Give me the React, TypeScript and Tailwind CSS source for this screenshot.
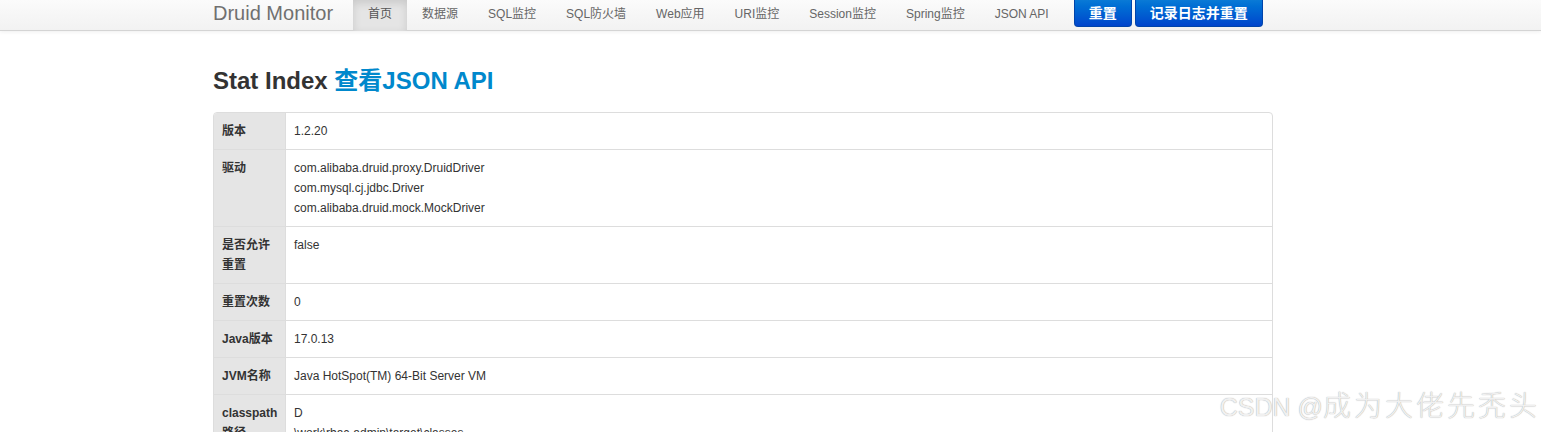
import React from "react";

const font = '"Liberation Sans", Arial, "Noto Sans CJK SC", sans-serif';

const navItems = ["首页", "数据源", "SQL监控", "SQL防火墙", "Web应用", "URI监控", "Session监控", "Spring监控", "JSON API"];

const rows: { label: string; value: string[] }[] = [
  { label: "版本", value: ["1.2.20"] },
  {
    label: "驱动",
    value: [
      "com.alibaba.druid.proxy.DruidDriver",
      "com.mysql.cj.jdbc.Driver",
      "com.alibaba.druid.mock.MockDriver",
    ],
  },
  { label: "是否允许重置", value: ["false"] },
  { label: "重置次数", value: ["0"] },
  { label: "Java版本", value: ["17.0.13"] },
  { label: "JVM名称", value: ["Java HotSpot(TM) 64-Bit Server VM"] },
  { label: "classpath路径", value: ["D", "\\work\\rbac-admin\\target\\classes"] },
];

export default function App() {
  return (
    <div className="relative h-[432px] w-full overflow-hidden bg-white text-[#333]" style={{ fontFamily: font }}>
      {/* navbar */}
      <div className="h-[31px] border-b border-[#d4d4d4] bg-gradient-to-b from-[#fbfbfb] to-[#f2f2f2] shadow-[0_1px_4px_rgba(0,0,0,0.065)]">
        <div className="ml-[213px] flex h-full items-start">
          <div className="pr-[20px] pt-[3px] text-[20px] leading-[20px] text-[#707070]">Druid Monitor</div>
          {navItems.map((n, i) => (
            <div
              key={n}
              className={
                i === 0
                  ? "h-[31px] bg-[#e5e5e5] px-[15px] pt-[4px] text-[12px] leading-[20px] text-[#555] shadow-[inset_0_3px_8px_rgba(0,0,0,0.125)]"
                  : "h-[31px] px-[15px] pt-[4px] text-[12px] leading-[20px] text-[#666]"
              }
            >
              {n}
            </div>
          ))}
          <div className="ml-[10px] flex gap-[3px]">
            <div className="flex h-[27px] items-center rounded-b-[4px] border border-t-0 border-[#0044aa] bg-gradient-to-b from-[#0a7ad6] to-[#0044cc] px-[14px] text-[14px] font-bold text-white">
              重置
            </div>
            <div className="flex h-[27px] items-center rounded-b-[4px] border border-t-0 border-[#0044aa] bg-gradient-to-b from-[#0a7ad6] to-[#0044cc] px-[14px] text-[14px] font-bold text-white">
              记录日志并重置
            </div>
          </div>
        </div>
      </div>

      {/* heading */}
      <h3 className="ml-[213px] mt-[30px] text-[24px] font-bold leading-[40px] text-[#333]">
        Stat Index <span className="text-[#0088cc]">查看JSON API</span>
      </h3>

      {/* table */}
      <div className="ml-[213px] mt-[11px] w-[1060px] overflow-hidden rounded-[4px] border border-[#dddddd]">
        {rows.map((r, i) => (
          <div key={r.label} className={i === 0 ? "flex" : "flex border-t border-[#dddddd]"}>
            <div className="w-[72px] shrink-0 border-r border-[#dddddd] bg-[#e5e5e5] p-[8px] text-[12px] font-bold leading-[20px] text-[#333]">
              {r.label}
            </div>
            <div className="flex-1 p-[8px] text-[12px] leading-[20px] text-[#333]">
              {r.value.map((v) => (
                <div key={v}>{v}</div>
              ))}
            </div>
          </div>
        ))}
      </div>

      {/* watermark */}
      <div
        className="absolute bottom-[10px] right-[4px] flex items-baseline whitespace-nowrap font-light leading-[30px] text-[#f0f0f0]"
        style={{ textShadow: "0 0 1px #999999" }}
      >
        <span className="text-[25px]">CSDN @</span>
        <span className="text-[28px] tracking-[3px]">成为大佬先秃</span>
        <span className="text-[28px]">头</span>
      </div>
    </div>
  );
}
